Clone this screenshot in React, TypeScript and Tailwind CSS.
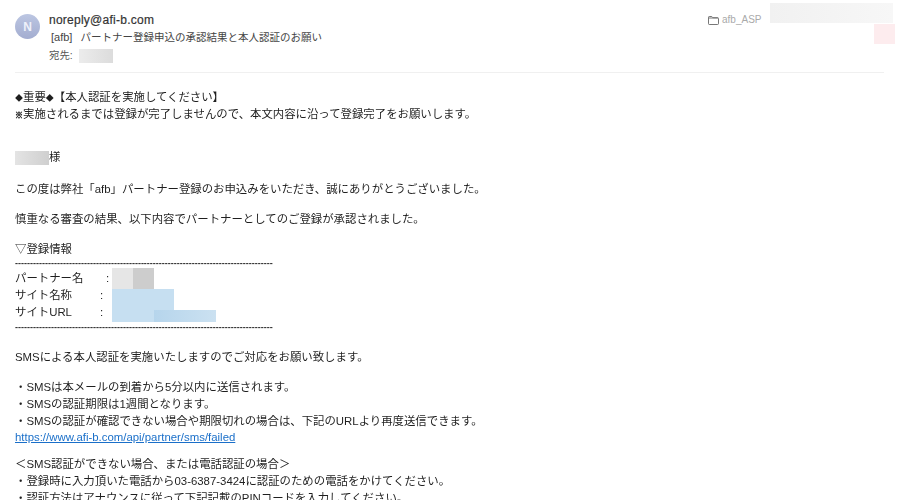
import React from "react";

const L = ({ children, mt = "" }: { children: React.ReactNode; mt?: string }) => (
  <div className={`h-[17px] leading-[17px] whitespace-nowrap ${mt}`}>{children}</div>
);

const DASHES = "-".repeat(86);

export default function App() {
  return (
    <div
      className="w-[900px] h-[500px] overflow-hidden bg-white text-[#1f1f1f] text-[11.4px] relative"
      style={{ fontFamily: '"Liberation Sans","Noto Sans CJK JP",sans-serif' }}
    >
      <div className="flex justify-between h-[73px] mx-[15px] w-[869px] border-b border-[#f0f0f0]">
        <div className="flex gap-[9px] pt-[14px]">
          <div className="w-[25px] h-[25px] rounded-full bg-gradient-to-b from-[#bcc6e2] to-[#a3add0] flex items-center justify-center text-[#eef1fa] font-bold text-[12px]">
            N
          </div>
          <div className="-mt-[3px] flex flex-col">
            <div className="h-[17px] leading-[18px] text-[12px] font-medium text-[#333] tracking-[0.25px] [-webkit-text-stroke:0.2px_#333]">noreply@afi-b.com</div>
            <div className="h-[18px] leading-[18px] text-[10.5px] text-[#444] whitespace-nowrap">
              <span className="text-[11px] ml-[2px] mr-[8px]">[afb]</span>パートナー登録申込の承認結果と本人認証のお願い
            </div>
            <div className="h-[19px] flex items-center text-[10.4px] text-[#555] gap-[6px]">
              <span>宛先:</span>
              <span className="w-[34px] h-[14px] bg-gradient-to-r from-[#ececec] to-[#dcdcdc]" />
            </div>
          </div>
        </div>
        <div className="flex items-start gap-[3px] pt-[12px] -mr-[11px] text-[#aaa] text-[10px]">
          <svg width="11" height="9" viewBox="0 0 11 9" fill="none" stroke="#777" strokeWidth="1" className="mt-[4px]">
            <path d="M.5 2V1.2C.5.8.8.5 1.2.5h2.6l1 1.2h4.9c.4 0 .8.3.8.8v5.3c0 .4-.4.7-.8.7H1.2c-.4 0-.7-.3-.7-.7V2h9.7" />
          </svg>
          <span className="leading-[16px] w-[45px]">afb_ASP</span>
          <div className="-mt-[9px] flex flex-col items-end pr-[2px]">
            <div className="w-[123px] h-[20px] bg-gradient-to-r from-[#f1f1f1] to-[#f7f7f7]" />
            <div className="w-[21px] h-[20px] mt-[1px] -mr-[2px] bg-[#fdecee]" />
          </div>
        </div>
      </div>

      <div className="pl-[15px] pt-[16px] blur-[0.25px]">
        <L>
          <span className="text-[8px]">◆</span>重要<span className="text-[8px]">◆</span>【本人認証を実施してください】
        </L>
        <L>
          <span className="text-[8px] [-webkit-text-stroke:0.5px_#1f1f1f]">※</span>実施されるまでは登録が完了しませんので、本文内容に沿って登録完了をお願いします。
        </L>
        <L mt="mt-[26px]">
          <span className="flex items-center">
            <span className="w-[34px] h-[14px] bg-gradient-to-r from-[#e4e4e4] to-[#cfcfcf]" />
            <span>様</span>
          </span>
        </L>
        <L mt="mt-[15px]">この度は弊社「afb」パートナー登録のお申込みをいただき、誠にありがとうございました。</L>
        <L mt="mt-[13px]">慎重なる審査の結果、以下内容でパートナーとしてのご登録が承認されました。</L>
        <L mt="mt-[13px]">▽登録情報</L>
        <div className="h-[14px] -mt-[2px] leading-[14px] text-[9px] font-bold overflow-hidden w-[258px] text-[#333]">{DASHES}</div>
        <div className="flex h-[17px] leading-[17px]">
          <span className="w-[91px]">パートナー名</span>
          <span className="w-[6px]">:</span>
          <span className="w-[21px] h-[21px] -mt-[2px] bg-[#e6e6e6]" />
          <span className="w-[21px] h-[21px] -mt-[2px] bg-[#cdcdcd]" />
        </div>
        <div className="flex h-[17px] leading-[17px]">
          <span className="w-[85px]">サイト名称</span>
          <span className="w-[12px]">:</span>
          <span className="w-[62px] h-[21px] mt-[2px] bg-[#c6dff1]" />
        </div>
        <div className="flex h-[17px] leading-[17px]">
          <span className="w-[85px]">サイトURL</span>
          <span className="w-[12px]">:</span>
          <span className="w-[42px] h-[12px] mt-[6px] bg-[#c6dff1]" />
          <span className="w-[62px] h-[12px] mt-[6px] bg-gradient-to-r from-[#b6d5ec] to-[#cbe1f1]" />
        </div>
        <div className="h-[14px] -mt-[1px] leading-[14px] text-[9px] font-bold overflow-hidden w-[258px] text-[#333]">{DASHES}</div>
        <L mt="mt-[15px]">SMSによる本人認証を実施いたしますのでご対応をお願い致します。</L>
        <L mt="mt-[13px]">・SMSは本メールの到着から5分以内に送信されます。</L>
        <L>・SMSの認証期限は1週間となります。</L>
        <L>・SMSの認証が確認できない場合や期限切れの場合は、下記のURLより再度送信できます。</L>
        <L mt="-mt-[1px]">
          <a className="text-[#1a6fc9] underline" href="#">https://www.afi-b.com/api/partner/sms/failed</a>
        </L>
        <L mt="mt-[10px]">＜SMS認証ができない場合、または電話認証の場合＞</L>
        <L>・登録時に入力頂いた電話から03-6387-3424に認証のための電話をかけてください。</L>
        <L>・認証方法はアナウンスに従って下記記載のPINコードを入力してください。</L>
      </div>
    </div>
  );
}
